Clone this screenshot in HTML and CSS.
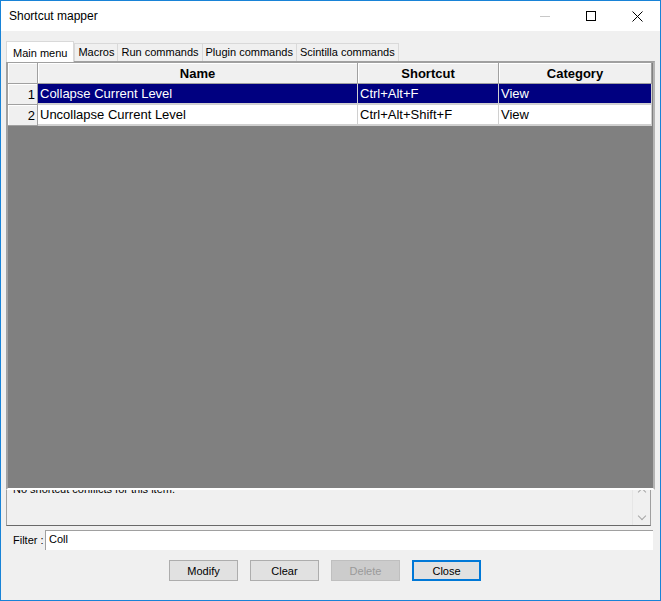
FILE: index.html
```html
<!DOCTYPE html>
<html lang="en">
<head>
  <meta charset="UTF-8">
  <title>Shortcut mapper</title>
  <link rel="stylesheet" href="styles.css">
</head>
<body>
<div class="window">
  <div class="titlebar">
    <span class="title">Shortcut mapper</span>
    <div class="caption">
      <div class="cap-btn"><span class="min-line"></span></div>
      <div class="cap-btn"><span class="max-box"></span></div>
      <div class="cap-btn">
        <svg width="11" height="11" viewBox="0 0 11 11"><path d="M0.5 0.5 L10.5 10.5 M10.5 0.5 L0.5 10.5" stroke="#000" stroke-width="1" fill="none"/></svg>
      </div>
    </div>
  </div>

  <div class="content">
    <div class="tabs">
      <div class="tab active">Main menu</div>
      <div class="tab">Macros</div>
      <div class="tab">Run commands</div>
      <div class="tab">Plugin commands</div>
      <div class="tab">Scintilla commands</div>
    </div>

    <div class="grid">
      <table>
        <colgroup>
          <col style="width:30px">
          <col style="width:320px">
          <col style="width:141px">
          <col style="width:153px">
        </colgroup>
        <thead>
          <tr>
            <th></th>
            <th>Name</th>
            <th>Shortcut</th>
            <th>Category</th>
          </tr>
        </thead>
        <tbody>
          <tr class="selected">
            <td class="num">1</td>
            <td>Collapse Current Level</td>
            <td>Ctrl+Alt+F</td>
            <td>View</td>
          </tr>
          <tr>
            <td class="num">2</td>
            <td>Uncollapse Current Level</td>
            <td>Ctrl+Alt+Shift+F</td>
            <td>View</td>
          </tr>
        </tbody>
      </table>
    </div>

    <div class="conflicts">
      <div class="conflicts-text">No shortcut conflicts for this item.</div>
      <div class="scrollbar">
        <span class="arrow up"></span>
        <span class="arrow down"></span>
      </div>
    </div>

    <div class="filter">
      <label>Filter :</label>
      <div class="filter-input">Coll</div>
    </div>

    <div class="buttons">
      <button>Modify</button>
      <button>Clear</button>
      <button class="disabled">Delete</button>
      <button class="default">Close</button>
    </div>
  </div>
</div>
</body>
</html>
```

FILE: styles.css
```css
body {
  margin: 0;
  font-family: "Liberation Sans", Arial, sans-serif;
}

.window {
  width: 661px;
  height: 601px;
  box-sizing: border-box;
  border: 1px solid #1883d7;
  background: #f0f0f0;
  display: flex;
  flex-direction: column;
}

.titlebar {
  height: 30px;
  background: #fff;
  display: flex;
  align-items: center;
  padding-left: 8px;
}

.title {
  font-size: 12px;
  color: #000;
}

.caption {
  margin-left: auto;
  display: flex;
  height: 30px;
}

.cap-btn {
  width: 46px;
  display: flex;
  align-items: center;
  justify-content: center;
}

.min-line {
  width: 10px;
  height: 1px;
  background: #c8c8c8;
}

.max-box {
  width: 8px;
  height: 8px;
  border: 1px solid #000;
}

.content {
  flex: 1;
  padding: 10px 5px 0 5px;
  display: flex;
  flex-direction: column;
}

.tabs {
  display: flex;
  height: 20px;
  align-items: flex-end;
  font-size: 11px;
}

.tab {
  height: 18px;
  line-height: 17px;
  padding: 0 3px;
  border: 1px solid #d9d9d9;
  border-bottom: none;
  margin-left: -1px;
  box-sizing: border-box;
  background: #f0f0f0;
  color: #000;
}

.tab.active {
  height: 21px;
  line-height: 22px;
  padding: 0 6px;
  margin-left: 0;
  margin-right: 1px;
  margin-bottom: -1px;
  background: #fff;
  position: relative;
  z-index: 1;
}

.grid {
  height: 429px;
  box-sizing: border-box;
  border: 2px solid #a0a0a0;
  border-right-color: #b4b4b4;
  border-bottom-color: #fff;
  background: #808080;
  overflow: hidden;
}

table {
  border-collapse: separate;
  border-spacing: 0;
  table-layout: fixed;
  width: 644px;
  font-size: 13px;
  background: #fff;
}

th {
  height: 21px;
  box-sizing: border-box;
  padding: 0;
  background: #f0f0f0;
  font-weight: bold;
  border-right: 1px solid #a0a0a0;
  border-bottom: 1px solid #a0a0a0;
  box-shadow: inset 1px 1px 0 #fff;
}

td {
  height: 21px;
  box-sizing: border-box;
  padding: 0 0 0 2px;
  border-right: 1px solid #d0d0d0;
  border-bottom: 2px solid #d0d0d0;
  white-space: nowrap;
  overflow: hidden;
}

td.num {
  background: #f0f0f0;
  text-align: right;
  padding: 0 2px 0 0;
  border-right-color: #a0a0a0;
  border-bottom: 1px solid #a0a0a0;
  box-shadow: inset 1px 1px 0 #fff;
}

tr.selected td {
  background: #000080;
  color: #fff;
}

tr.selected td.num {
  background: #f0f0f0;
  color: #000;
}

.conflicts {
  height: 36px;
  box-sizing: border-box;
  margin-right: 4px;
  border-left: 1px solid #a0a0a0;
  border-right: 1px solid #a0a0a0;
  border-bottom: 1px solid #696969;
  display: flex;
  overflow: hidden;
  font-size: 11px;
}

.conflicts-text {
  flex: 1;
  padding-left: 6px;
  margin-top: -7px;
  color: #000;
}

.scrollbar {
  width: 17px;
  border-left: 1px solid #e6e6e6;
  display: flex;
  flex-direction: column;
  align-items: center;
  justify-content: space-between;
  padding: 0 0 6px 0;
}

.arrow {
  width: 5px;
  height: 5px;
  border-right: 1px solid #a6a6a6;
  border-bottom: 1px solid #a6a6a6;
}

.arrow.up {
  transform: rotate(-135deg);
  margin-top: -1px;
}

.arrow.down {
  transform: rotate(45deg);
}

.filter {
  display: flex;
  align-items: center;
  margin-top: 4px;
  height: 20px;
  font-size: 12px;
}

.filter label {
  width: 39px;
  padding-left: 7px;
  box-sizing: border-box;
  font-size: 11px;
}

.filter-input {
  flex: 1;
  margin-right: 2px;
  height: 20px;
  box-sizing: border-box;
  background: #fff;
  border-top: 1px solid #a0a0a0;
  border-left: 1px solid #a0a0a0;
  padding: 2px 0 0 3px;
  font-size: 11px;
}

.buttons {
  display: flex;
  gap: 12px;
  margin-top: 10px;
  padding-left: 163px;
}

button {
  width: 69px;
  height: 21px;
  font-family: "Liberation Sans", Arial, sans-serif;
  font-size: 11px;
  background: #e1e1e1;
  border: 1px solid #adadad;
  color: #000;
  padding: 0;
}

button.disabled {
  background: #cccccc;
  border-color: #bfbfbf;
  color: #9a9a9a;
}

button.default {
  border: 2px solid #0078d7;
}
```
